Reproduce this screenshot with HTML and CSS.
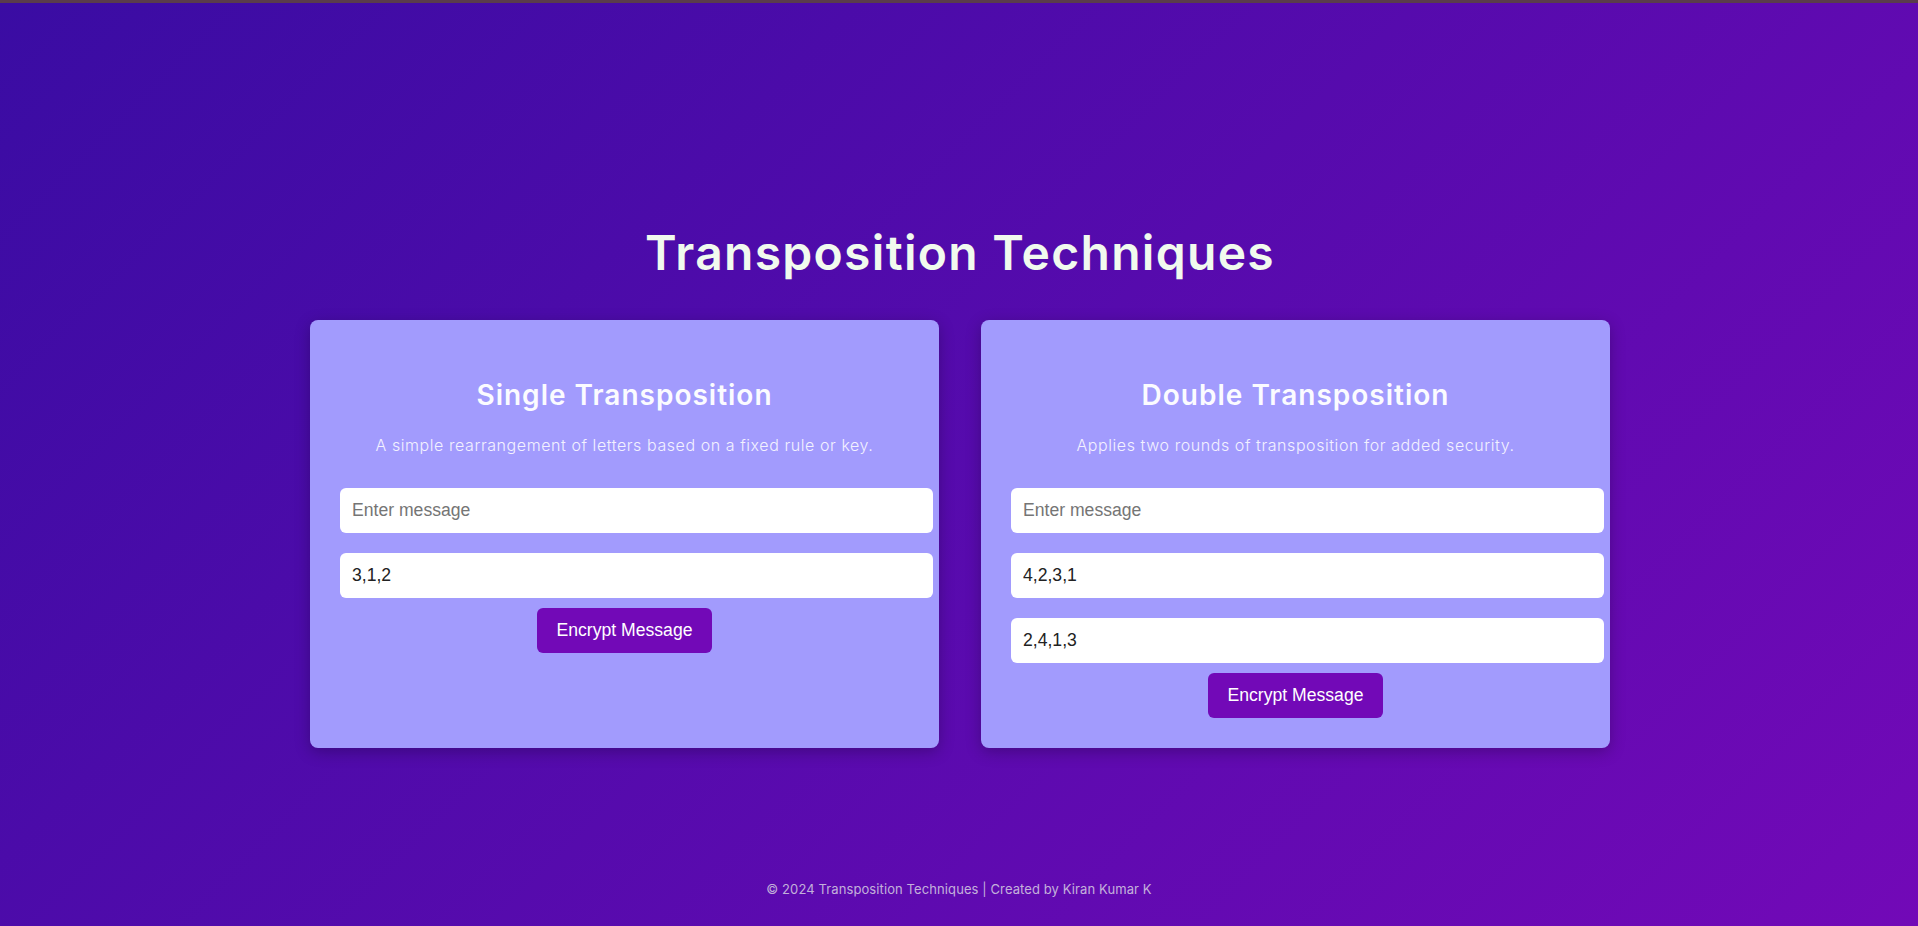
FILE: index.html
```html
<!DOCTYPE html>
<html lang="en">
<head>
<meta charset="utf-8">
<title>Transposition Techniques</title>
<link rel="stylesheet" href="styles.css">
</head>
<body>
<div class="topbar"></div>
<main class="page">
  <h1 class="title">Transposition Techniques</h1>
  <div class="cards">
    <section class="card">
      <h2 class="card-title">Single Transposition</h2>
      <p class="card-desc">A simple rearrangement of letters based on a fixed rule or key.</p>
      <input class="field" type="text" placeholder="Enter message">
      <input class="field" type="text" value="3,1,2">
      <button class="btn" type="button">Encrypt Message</button>
    </section>
    <section class="card">
      <h2 class="card-title">Double Transposition</h2>
      <p class="card-desc">Applies two rounds of transposition for added security.</p>
      <input class="field" type="text" placeholder="Enter message">
      <input class="field" type="text" value="4,2,3,1">
      <input class="field" type="text" value="2,4,1,3">
      <button class="btn" type="button">Encrypt Message</button>
    </section>
  </div>
</main>
<footer class="footer">© 2024 Transposition Techniques | Created by Kiran Kumar K</footer>
</body>
</html>
```
FILE: styles.css
```css
html, body {
  margin: 0;
  padding: 0;
}
body {
  min-height: 100vh;
  background: linear-gradient(135deg, #3a0ca3 0%, #7209b7 100%);
  font-family: "Inter", "Open Sans", sans-serif;
  color: #f1faee;
  overflow: hidden;
}
.topbar {
  height: 3px;
  background: #5a3c4c;
}
.page {
  padding-top: 221px;
  padding-left: 2px;
  display: flex;
  flex-direction: column;
  align-items: center;
}
.title {
  margin: 0 0 38px;
  font-size: 48px;
  line-height: 58px;
  font-weight: 600;
  color: #f1faee;
  letter-spacing: 1.3px;
}
.cards {
  width: 1300px;
  display: flex;
  gap: 42px;
}
.card {
  flex: 1;
  background: #a29bfd;
  border-radius: 8px;
  padding: 30px;
  box-shadow: 0 4px 15px rgba(0, 0, 0, 0.25);
  display: flex;
  flex-direction: column;
  align-items: flex-start;
}
.card-title {
  align-self: stretch;
  text-align: center;
  margin: 24px 0 17px;
  font-size: 28px;
  line-height: 42px;
  font-weight: 600;
  letter-spacing: 1px;
  color: #fbfbff;
}
.card-desc {
  align-self: stretch;
  text-align: center;
  margin: 0 0 21px;
  font-size: 16px;
  line-height: 24px;
  font-weight: 300;
  letter-spacing: 0.57px;
  color: #f3f1ff;
}
.field {
  width: 100%;
  box-sizing: content-box;
  margin: 10px 0;
  padding: 12px;
  border: none;
  border-radius: 6px;
  background: #fff;
  font-family: "Liberation Sans", Arial, sans-serif;
  font-size: 17.6px;
  line-height: 21px;
  color: #222;
  outline: none;
}
.field::placeholder {
  color: #757575;
}
.btn {
  align-self: center;
  margin: 0;
  padding: 12px 20px;
  border: none;
  border-radius: 6px;
  background: #7209b7;
  color: #fff;
  font-family: "Liberation Sans", Arial, sans-serif;
  font-size: 17.6px;
  line-height: 21px;
  cursor: pointer;
}
.footer {
  margin-top: 131px;
  text-align: center;
  font-size: 13px;
  line-height: 20px;
  letter-spacing: 0.1px;
  color: rgba(241, 250, 238, 0.7);
}
```
